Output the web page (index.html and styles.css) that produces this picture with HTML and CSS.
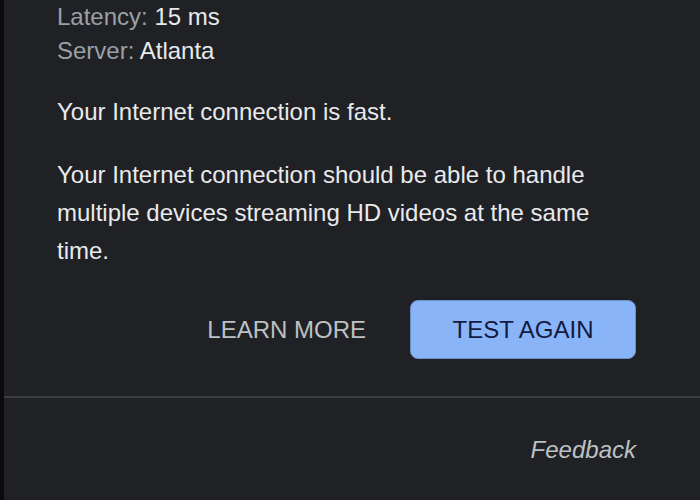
FILE: index.html
```html
<!DOCTYPE html>
<html lang="en">
<head>
    <meta charset="UTF-8">
    <meta name="viewport" content="width=device-width, initial-scale=1.0">
    <title>Speed Test Result</title>
    <link rel="stylesheet" href="styles.css">
</head>
<body>

<div class="panel">
    <div class="result">
        <div class="stats">
            <div class="stat"><span class="label">Latency:</span> 15 ms</div>
            <div class="stat"><span class="label">Server:</span> Atlanta</div>
        </div>

        <p>Your Internet connection is fast.</p>
        <p>Your Internet connection should be able to handle multiple devices streaming HD videos at the same time.</p>

        <div class="actions">
            <button class="btn-text">LEARN MORE</button>
            <button class="btn-primary">TEST AGAIN</button>
        </div>
    </div>

    <div class="footer">
        <a class="feedback" href="#">Feedback</a>
    </div>
</div>

</body>
</html>
```

FILE: styles.css
```css
body {
    margin: 0;
    background-color: #0b0b0d;
    font-family: "Liberation Sans", Arial, sans-serif;
    font-size: 24px;
    color: #e8eaed;
}
.panel {
    margin-left: 4px;
    height: 500px;
    background-color: #202124;
}
.result {
    padding: 0 64px 37px 53px;
    border-bottom: 2px solid #3c3d41;
}
.stat {
    line-height: 34px;
}
.label {
    color: #9aa0a6;
}
.stats {
    margin-bottom: 25px;
}
p {
    margin: 0 0 25px 0;
    line-height: 38px;
    padding-right: 40px;
}
.actions {
    display: flex;
    justify-content: flex-end;
    align-items: center;
    margin-top: 30px;
}
button {
    font-family: "Liberation Sans", Arial, sans-serif;
    font-size: 24px;
    border: 0;
    cursor: pointer;
}
.btn-text {
    background: none;
    color: #bdc1c6;
    padding: 0 44px 0 0;
}
.btn-primary {
    width: 226px;
    height: 59px;
    background-color: #8ab4f8;
    color: #121a3f;
    border: 1px solid #6d8fc7;
    border-radius: 8px;
}
.footer {
    display: flex;
    justify-content: flex-end;
    padding: 38px 64px 0 0;
}
.feedback {
    color: #bdc1c6;
    font-style: italic;
    text-decoration: none;
}
```
